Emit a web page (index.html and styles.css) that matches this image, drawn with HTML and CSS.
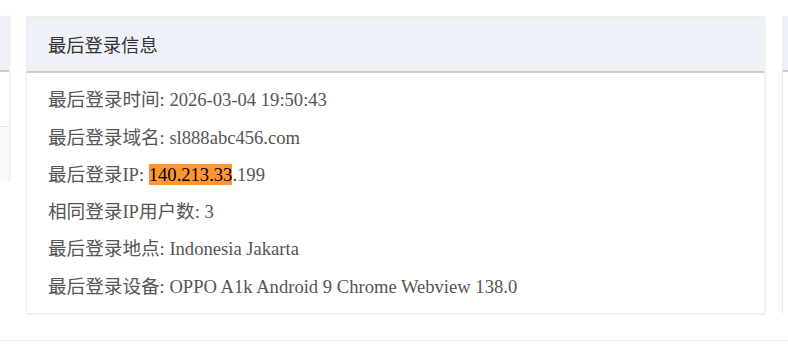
FILE: index.html
```html
<!DOCTYPE html>
<html lang="zh">
<head>
<meta charset="utf-8">
<title>最后登录信息</title>
<link rel="stylesheet" href="styles.css">
</head>
<body>
<div class="page">
  <div class="track">
    <div class="sliver sliver-left">
      <div class="card-head"></div>
      <div class="sliver-gap"></div>
      <div class="sliver-box"></div>
    </div>
    <section class="card">
      <header class="card-head"><h2 class="card-title">最后登录信息</h2></header>
      <div class="card-body">
        <p class="row">最后登录时间: 2026-03-04 19:50:43</p>
        <p class="row">最后登录域名: sl888abc456.com</p>
        <p class="row">最后登录IP: <mark class="hit">140.213.33</mark>.199</p>
        <p class="row">相同登录IP用户数: 3</p>
        <p class="row">最后登录地点: Indonesia Jakarta</p>
        <p class="row">最后登录设备: OPPO A1k Android 9 Chrome Webview 138.0</p>
      </div>
    </section>
    <div class="sliver sliver-right">
      <div class="card-head"></div>
    </div>
  </div>
  <div class="foot-line"></div>
</div>
</body>
</html>
```
FILE: styles.css
```css
html, body {
  margin: 0;
  padding: 0;
  background: #ffffff;
}
body {
  width: 788px;
  height: 344px;
  overflow: hidden;
  font-family: "Liberation Serif", "Noto Sans CJK SC", serif;
}
.page {
  padding-top: 16px;
}
.track {
  display: flex;
  align-items: flex-start;
  height: 298px;
}
.card {
  flex: 0 0 739px;
  margin: 0 17px 0 16px;
  box-sizing: border-box;
  height: 298px;
  border: 1px solid #ececec;
  box-shadow: 1px 1px 2px rgba(0, 0, 0, 0.06);
  background: #fff;
}
.card-head {
  height: 54px;
  background: #eef1f8;
  border-bottom: 2px solid #cccccc;
  display: flex;
  align-items: center;
  padding-left: 21px;
}
.card-title {
  margin: 0;
  font-size: 18.3px;
  font-weight: normal;
  color: #333;
}
.card-body {
  padding: 8.3px 0 8px 21px;
}
.row {
  margin: 0;
  font-size: 18.6px;
  line-height: 37.3px;
  color: #555;
}
.hit {
  background: #ff9632;
  color: #000;
}
.sliver {
  flex: 0 0 auto;
  box-sizing: border-box;
}
.sliver-left {
  width: 10px;
  border-right: 1px solid #ececec;
  box-shadow: 1px 0 2px rgba(0, 0, 0, 0.04);
}
.sliver-left .card-head,
.sliver-right .card-head {
  padding-left: 0;
}
.sliver-gap {
  height: 54px;
}
.sliver-box {
  height: 55px;
  background: #fafafa;
  border-top: 1px solid #e6e6e6;
}
.sliver-right {
  width: 20px;
  height: 298px;
  border-left: 1px solid #ececec;
}
.foot-line {
  margin-top: 26px;
  height: 1px;
  background: #f3f3f3;
}
```
